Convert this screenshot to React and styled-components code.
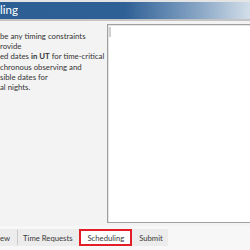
import React from 'react'
import styled, { createGlobalStyle } from 'styled-components'

const lines = [
  [{ t: 'be any timing constraints' }],
  [{ t: 'rovide' }],
  [{ t: 'ed dates ' }, { t: 'in UT', b: true }, { t: ' for time-critical' }],
  [{ t: 'chronous observing and' }],
  [{ t: 'sible dates for' }],
  [{ t: 'al nights.' }],
]

const tabs = [
  { label: 'ew' },
  { label: 'Time Requests' },
  { label: 'Scheduling', active: true },
  { label: 'Submit' },
]

const App = () => {
  return (
    <>
      <GlobalStyle />
      <Window>
        <TopStrip />
        <TitleBar>ling</TitleBar>
        <Body>
          <Help>
            {lines.map((line, i) => (
              <HelpLine key={i}>
                {line.map((part, j) =>
                  part.b ? <strong key={j}>{part.t}</strong> : <span key={j}>{part.t}</span>
                )}
              </HelpLine>
            ))}
          </Help>
          <Editor>
            <Caret />
          </Editor>
        </Body>
        <TabBar>
          <TabStrip>
            {tabs.map((tab, i) => (
              <Tab key={tab.label} $active={tab.active} $first={i === 0}>
                {tab.label}
              </Tab>
            ))}
          </TabStrip>
        </TabBar>
      </Window>
    </>
  )
}

export default App

const GlobalStyle = createGlobalStyle`
  html, body {
    margin: 0;
    padding: 0;
    background: #f3f3f3;
    overflow: hidden;
  }
`

const Window = styled.div`
  width: 250px;
  height: 250px;
  display: flex;
  flex-direction: column;
  font-family: Lato, 'Open Sans', sans-serif;
  color: #333;
  overflow: hidden;
`

const TopStrip = styled.div`
  height: 2px;
  background: #e4e4e4;
`

const TitleBar = styled.div`
  height: 17px;
  line-height: 16px;
  font-size: 11.5px;
  color: #ffffff;
  background: linear-gradient(to right, #2d5f95 0%, #2e6096 50%, #8aa7c6 80%, #d3dee9 100%);
  border-bottom: 2px solid #c4c4c4;
`

const Body = styled.div`
  flex: 1;
  display: flex;
  padding-top: 3px;
  min-height: 0;
`

const Help = styled.div`
  width: 107px;
  flex-shrink: 0;
  padding-top: 7px;
  font-size: 7.8px;
  line-height: 10.2px;
  white-space: nowrap;
  overflow: hidden;

  strong {
    font-weight: 700;
  }
`

const HelpLine = styled.div``

const Editor = styled.div`
  flex: 1;
  margin-right: -10px;
  margin-bottom: 3px;
  background: #ffffff;
  border: 1px solid #a0a0a0;
  box-shadow: inset 1px 1px 0 #e3e3e3;
  padding: 2px 1px;
`

const Caret = styled.div`
  width: 2px;
  height: 10px;
  background: #d0d0d0;
`

const TabBar = styled.div`
  height: 21px;
  display: flex;
  align-items: flex-start;
  padding-top: 3px;
  background: #f7f7f7;
`

const TabStrip = styled.div`
  display: flex;
  align-items: stretch;
  height: 17px;
  background: #ececec;
`

const Tab = styled.div`
  font-size: 7.7px;
  line-height: 15px;
  color: #3a3a3a;
  padding: 0 ${({ $active }) => ($active ? '6px' : '3px')};
  background: ${({ $active }) => ($active ? '#ffffff' : 'transparent')};
  border: 2px solid ${({ $active }) => ($active ? '#e41e26' : 'transparent')};
  border-right: ${({ $first }) => ($first ? '1px solid #c8c8c8' : '')};
  margin: 0 ${({ $active }) => ($active ? '2px' : '0')};
  ${({ $first }) => ($first ? 'padding-left: 0; padding-right: 7px; margin-left: -2px;' : '')}
`
